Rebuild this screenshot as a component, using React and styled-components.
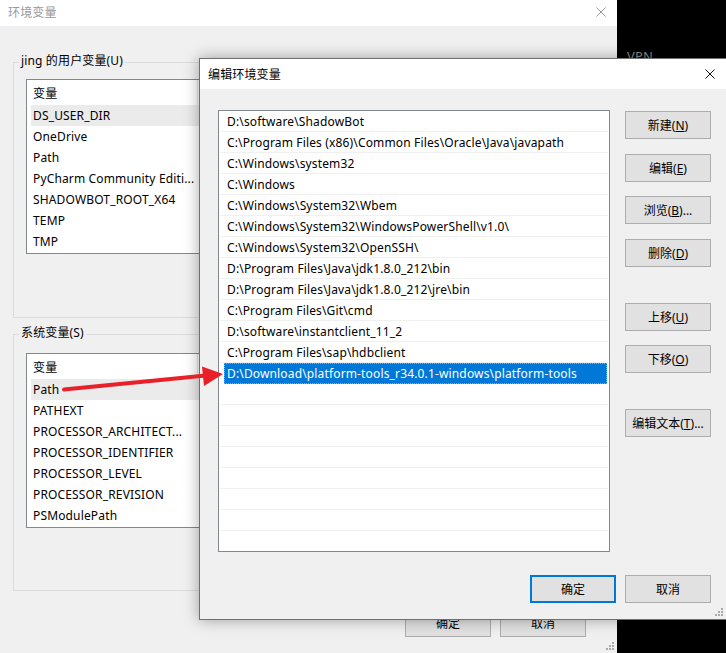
import React from 'react';
import styled, { createGlobalStyle } from 'styled-components';

const GlobalStyle = createGlobalStyle`
  html, body {
    margin: 0;
    padding: 0;
    background: #000;
  }
  body {
    font-family: "Noto Sans", "Noto Sans CJK SC", sans-serif;
    font-size: 12px;
    letter-spacing: 0.15px;
    color: #000;
  }
`;

const userVars = ['DS_USER_DIR', 'OneDrive', 'Path', 'PyCharm Community Editi...', 'SHADOWBOT_ROOT_X64', 'TEMP', 'TMP'];
const systemVars = ['Path', 'PATHEXT', 'PROCESSOR_ARCHITECT...', 'PROCESSOR_IDENTIFIER', 'PROCESSOR_LEVEL', 'PROCESSOR_REVISION', 'PSModulePath'];

const paths = [
  'D:\\software\\ShadowBot',
  'C:\\Program Files (x86)\\Common Files\\Oracle\\Java\\javapath',
  'C:\\Windows\\system32',
  'C:\\Windows',
  'C:\\Windows\\System32\\Wbem',
  'C:\\Windows\\System32\\WindowsPowerShell\\v1.0\\',
  'C:\\Windows\\System32\\OpenSSH\\',
  'D:\\Program Files\\Java\\jdk1.8.0_212\\bin',
  'D:\\Program Files\\Java\\jdk1.8.0_212\\jre\\bin',
  'C:\\Program Files\\Git\\cmd',
  'D:\\software\\instantclient_11_2',
  'C:\\Program Files\\sap\\hdbclient',
  'D:\\Download\\platform-tools_r34.0.1-windows\\platform-tools',
];

const sideButtons = [
  { label: '新建', key: 'N', top: 1 },
  { label: '编辑', key: 'E', top: 15 },
  { label: '浏览', key: 'B', top: 14, dots: true },
  { label: '删除', key: 'D', top: 15 },
  { label: '上移', key: 'U', top: 36 },
  { label: '下移', key: 'O', top: 14 },
  { label: '编辑文本', key: 'T', top: 36, dots: true },
];

const CloseIcon = ({ color }) => (
  <svg width="10" height="10" viewBox="0 0 10 10">
    <path d="M0.5 0.5 L9.5 9.5 M9.5 0.5 L0.5 9.5" stroke={color} strokeWidth="1" fill="none" />
  </svg>
);

const Grip = () => (
  <svg width="8" height="8" viewBox="0 0 8 8">
    <g fill="#a8a8a8">
      <rect x="6" y="0" width="2" height="2" />
      <rect x="3" y="3" width="2" height="2" />
      <rect x="6" y="3" width="2" height="2" />
      <rect x="0" y="6" width="2" height="2" />
      <rect x="3" y="6" width="2" height="2" />
      <rect x="6" y="6" width="2" height="2" />
    </g>
  </svg>
);

const VarList = ({ items, selected }) => (
  <ListBox>
    <ListHeader>
      <HeaderCell>变量</HeaderCell>
    </ListHeader>
    {items.map((name, i) => (
      <VarRow key={name} $selected={i === selected}>{name}</VarRow>
    ))}
  </ListBox>
);

const App = () => {
  const emptyRows = 21 - paths.length;
  return (
    <>
      <GlobalStyle />
      <Desktop>
        <VpnLabel>VPN</VpnLabel>

        <BackWindow>
          <TitleBar $inactive>
            <span>环境变量</span>
            <CloseIcon color="#999" />
          </TitleBar>
          <BackBody>
            <Group $height={264} $pad={9}>
              <Legend>jing 的用户变量(U)</Legend>
              <VarList items={userVars} selected={0} />
            </Group>
            <Group $height={265} $pad={11} $gapTop={8}>
              <Legend>系统变量(S)</Legend>
              <VarList items={systemVars} selected={0} />
            </Group>
            <BackFooter>
              <Button>确定</Button>
              <Button>取消</Button>
            </BackFooter>
          </BackBody>
          <GripSpot><Grip /></GripSpot>
        </BackWindow>

        <Dialog>
          <TitleBar $tall>
            <span>编辑环境变量</span>
            <CloseIcon color="#111" />
          </TitleBar>
          <DialogBody>
            <PathList>
              {paths.map((p, i) => (
                <PathRow key={p} $selected={i === paths.length - 1}>{p}</PathRow>
              ))}
              {Array.from({ length: emptyRows }).map((_, i) => (
                <PathRow key={'empty' + i} $last={i === emptyRows - 1} />
              ))}
            </PathList>
            <SideColumn>
              {sideButtons.map((b) => (
                <Button key={b.key} $top={b.top}>
                  {b.label}(<u>{b.key}</u>){b.dots ? '...' : ''}
                </Button>
              ))}
            </SideColumn>
            <DialogFooter>
              <Button $primary>确定</Button>
              <Button>取消</Button>
            </DialogFooter>
          </DialogBody>
          <GripSpot><Grip /></GripSpot>
        </Dialog>

        <ArrowLayer width="726" height="653" viewBox="0 0 726 653">
          <line x1="64" y1="389.5" x2="206" y2="375.5" stroke="#e8202a" strokeWidth="4" strokeLinecap="round" />
          <polygon points="223,374 202,366.5 204,386" fill="#e8202a" />
        </ArrowLayer>
      </Desktop>
    </>
  );
};

const Desktop = styled.div`
  position: relative;
  width: 726px;
  height: 653px;
  overflow: hidden;
  background: #000;
`;

const VpnLabel = styled.div`
  position: absolute;
  left: 627px;
  top: 47px;
  color: #8a8a8a;
  font-size: 13px;
`;

const BackWindow = styled.div`
  position: absolute;
  left: 0;
  top: 0;
  width: 617px;
  height: 653px;
  background: #f0f0f0;
  display: flex;
  flex-direction: column;
`;

const TitleBar = styled.div`
  height: ${({ $tall }) => ($tall ? 30 : 26)}px;
  box-sizing: border-box;
  flex: none;
  background: #fff;
  display: flex;
  align-items: center;
  justify-content: space-between;
  padding: 0 11px ${({ $tall }) => ($tall ? 0 : 3)}px 8px;
  color: ${({ $inactive }) => ($inactive ? '#999' : '#000')};
  font-size: 12px;

  svg {
    display: block;
  }
`;

const BackBody = styled.div`
  padding: 28px 0 0 13px;
  display: flex;
  flex-direction: column;
`;

const Group = styled.fieldset`
  margin: ${({ $gapTop }) => $gapTop || 0}px 0 0 0;
  height: ${({ $height }) => $height}px;
  width: 600px;
  box-sizing: border-box;
  border: 1px solid #dcdcdc;
  padding: ${({ $pad }) => $pad}px 0 0 12px;
`;

const Legend = styled.legend`
  margin-left: -7px;
  padding: 0 2px;
  line-height: 16px;
  font-size: 12px;
  color: #000;
  position: relative;
  top: -1px;
`;

const ListBox = styled.div`
  width: 560px;
  height: 175px;
  box-sizing: border-box;
  border: 1px solid #828790;
  background: #fff;
  padding: 0 0 0 4px;
`;

const ListHeader = styled.div`
  height: 25px;
  display: flex;
`;

const HeaderCell = styled.div`
  width: 164px;
  border-right: 1px solid #e5e5e5;
  display: flex;
  align-items: center;
  padding-left: 2px;
`;

const VarRow = styled.div`
  height: 21px;
  line-height: 21px;
  padding-left: 2px;
  white-space: nowrap;
  background: ${({ $selected }) => ($selected ? '#ebebeb' : 'transparent')};
`;

const BackFooter = styled.div`
  display: flex;
  justify-content: flex-end;
  gap: 9px;
  margin-top: 18px;
  padding-right: 31px;
`;

const GripSpot = styled.div`
  position: absolute;
  right: 3px;
  bottom: 3px;
  line-height: 0;
`;

const Dialog = styled.div`
  position: absolute;
  left: 199px;
  top: 58px;
  width: 528px;
  height: 562px;
  box-sizing: border-box;
  border: 1px solid #707070;
  background: #f0f0f0;
  box-shadow: 0 0 14px rgba(0, 0, 0, 0.35);
  display: flex;
  flex-direction: column;
`;

const DialogBody = styled.div`
  padding: 21px 0 0 18px;
  display: grid;
  grid-template-columns: 392px 86px;
  column-gap: 15px;
  align-items: start;
`;

const PathList = styled.div`
  height: 442px;
  box-sizing: border-box;
  border: 1px solid #828790;
  background: #fff;
  padding: 0 1px;
  overflow: hidden;
`;

const PathRow = styled.div`
  height: 21px;
  box-sizing: border-box;
  padding-top: 2px;
  line-height: 18px;
  white-space: nowrap;
  padding-left: ${({ $selected }) => ($selected ? 3 : 7)}px;
  margin-left: ${({ $selected }) => ($selected ? 4 : 0)}px;
  margin-right: ${({ $selected }) => ($selected ? 1 : 0)}px;
  border-bottom: 1px solid ${({ $selected, $last }) => ($selected ? '#0078d7' : $last ? 'transparent' : '#f0f0f0')};
  background: ${({ $selected }) => ($selected ? '#0078d7' : 'transparent')};
  color: ${({ $selected }) => ($selected ? '#fff' : '#000')};
  outline: ${({ $selected }) => ($selected ? '1px dotted #f5a000' : 'none')};
  outline-offset: -1px;
`;

const SideColumn = styled.div`
  display: flex;
  flex-direction: column;
`;

const Button = styled.button`
  width: 86px;
  height: 28px;
  margin-top: ${({ $top }) => $top || 0}px;
  box-sizing: border-box;
  background: #e1e1e1;
  border: ${({ $primary }) => ($primary ? '2px solid #0078d7' : '1px solid #adadad')};
  border-radius: 0;
  font-family: "Noto Sans", "Noto Sans CJK SC", sans-serif;
  font-size: 12px;
  color: #000;
  padding: 0;
  display: flex;
  align-items: center;
  justify-content: center;
`;

const DialogFooter = styled.div`
  grid-column: 1 / span 2;
  display: flex;
  justify-content: flex-end;
  gap: 9px;
  margin-top: 23px;
`;

const ArrowLayer = styled.svg`
  position: absolute;
  left: 0;
  top: 0;
  pointer-events: none;
`;

export default App;
